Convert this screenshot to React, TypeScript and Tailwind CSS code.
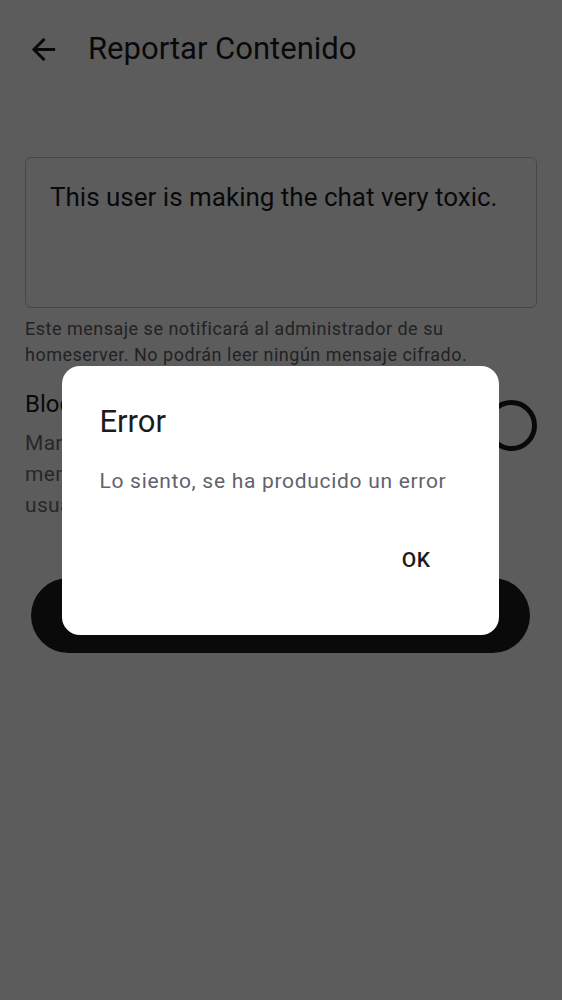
export default function App() {
  return (
    <div className="relative w-[562px] h-[1000px] overflow-hidden bg-white font-[Roboto,sans-serif] text-[#1b1b1f]">
      {/* Header */}
      <div className="flex items-center pt-[29px] pl-[26px]">
        <svg viewBox="0 0 24 24" className="w-[35px] h-[35px]" fill="#1b1b1f">
          <path d="M20 11H7.83l5.59-5.59L12 4l-8 8 8 8 1.41-1.41L7.83 13H20v-2z" />
        </svg>
        <h1 className="ml-[27px] text-[31px] leading-[40px] font-normal">Reportar Contenido</h1>
      </div>

      {/* Content */}
      <div className="px-[25px]">
        <div className="mt-[88px] h-[151px] rounded-[6px] border-[1.5px] border-[#c4c4c4] pt-[22px] pl-[24px]">
          <p className="text-[26px] leading-[34px]">This user is making the chat very toxic.</p>
        </div>
        <p className="mt-[8px] text-[18px] leading-[26px] tracking-[0.5px] text-[#606064]">
          Este mensaje se notificará al administrador de su homeserver. No podrán leer ningún mensaje cifrado.
        </p>

        <div className="mt-[20px] flex items-start justify-between">
          <div className="flex flex-col">
            <p className="text-[24px] leading-[32px]">Bloquear usuario</p>
            <p className="mt-[8px] text-[21px] leading-[31px] tracking-[0.3px] text-[#6e6e72]">
              <span className="block">Marcar como ocultos todos los</span>
              <span className="block">mensajes actuales y futuros de este</span>
              <span className="block">usuario</span>
            </p>
          </div>
          <div className="mt-[12px] flex items-center">
            <div className="w-[51px] h-[51px] rounded-full border-[5px] border-[#1b1b1f]" />
          </div>
        </div>

        <button className="mt-[57px] mx-[6px] w-[499px] h-[75px] rounded-full bg-[#1c1c21] text-white text-[21px] font-medium">
          Enviar
        </button>
      </div>

      {/* Scrim */}
      <div className="absolute inset-0 bg-[rgba(0,0,0,0.64)]" />

      {/* Dialog */}
      <div className="absolute inset-0 flex items-center justify-center">
        <div className="w-[437px] h-[269px] -translate-x-[1px] rounded-[18px] bg-white pt-[36px] px-[38px] flex flex-col">
          <h2 className="text-[31px] leading-[40px] font-normal text-[#1b1b1f]">Error</h2>
          <p className="mt-[25px] text-[21px] leading-[28px] tracking-[0.7px] text-[#5f636e]">
            Lo siento, se ha producido un error
          </p>
          <div className="mt-[51px] flex justify-end pr-[30px]">
            <button className="text-[21px] leading-[28px] font-medium tracking-[0.5px] text-[#1b1b1f]">OK</button>
          </div>
        </div>
      </div>
    </div>
  );
}
